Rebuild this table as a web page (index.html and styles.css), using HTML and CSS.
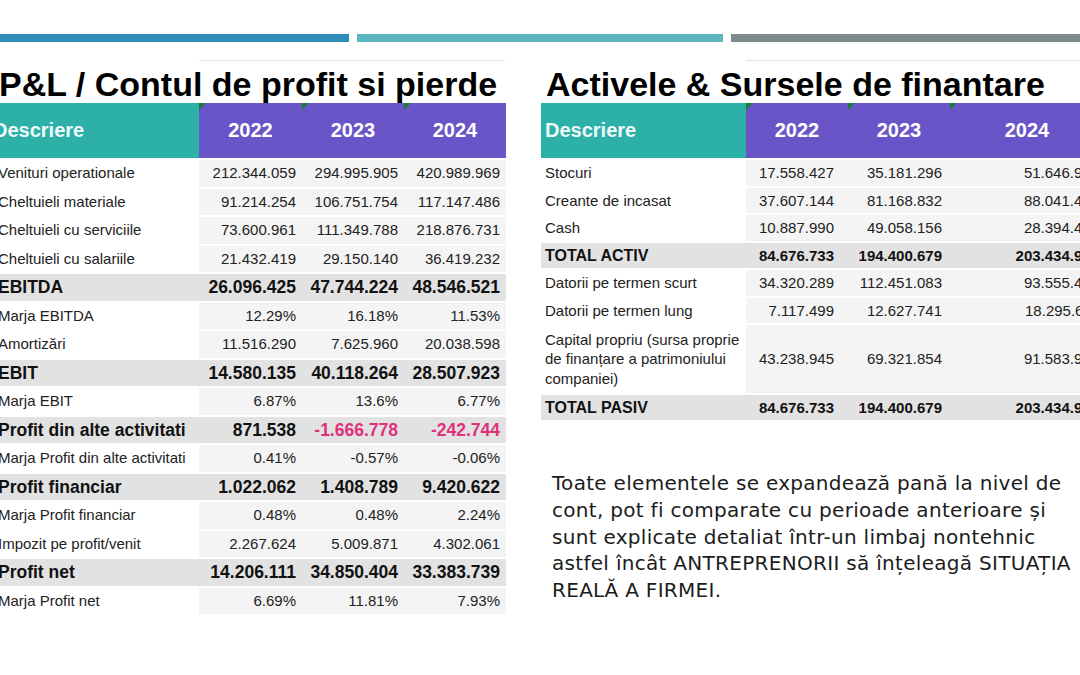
FILE: index.html
```html
<!DOCTYPE html>
<html lang="ro">
<head>
  <meta charset="UTF-8" />
  <meta name="viewport" content="width=device-width, initial-scale=1.0" />
  <title>P&amp;L si bilant</title>
  <link rel="stylesheet" href="styles.css">
</head>
<body>
<div class="bars">
  <div class="bar bar-blue"></div>
  <div class="bar bar-teal"></div>
  <div class="bar bar-gray"></div>
</div>

<div class="panels">
  <div class="panel panel-left">
    <h1 class="title">P&amp;L / Contul de profit si pierde</h1>
    <table class="fin pl">
      <colgroup>
        <col class="c-desc"><col class="c-yr"><col class="c-yr"><col class="c-yr">
      </colgroup>
      <thead>
        <tr>
          <th class="desc">Descriere</th>
          <th class="yr">2022</th>
          <th class="yr">2023</th>
          <th class="yr">2024</th>
        </tr>
      </thead>
      <tbody>
        <tr><td>Venituri operationale</td><td class="num">212.344.059</td><td class="num">294.995.905</td><td class="num">420.989.969</td></tr>
        <tr><td>Cheltuieli materiale</td><td class="num">91.214.254</td><td class="num">106.751.754</td><td class="num">117.147.486</td></tr>
        <tr><td>Cheltuieli cu serviciile</td><td class="num">73.600.961</td><td class="num">111.349.788</td><td class="num">218.876.731</td></tr>
        <tr><td>Cheltuieli cu salariile</td><td class="num">21.432.419</td><td class="num">29.150.140</td><td class="num">36.419.232</td></tr>
        <tr class="total"><td>EBITDA</td><td class="num">26.096.425</td><td class="num">47.744.224</td><td class="num">48.546.521</td></tr>
        <tr><td>Marja EBITDA</td><td class="num">12.29%</td><td class="num">16.18%</td><td class="num">11.53%</td></tr>
        <tr><td>Amortizări</td><td class="num">11.516.290</td><td class="num">7.625.960</td><td class="num">20.038.598</td></tr>
        <tr class="total"><td>EBIT</td><td class="num">14.580.135</td><td class="num">40.118.264</td><td class="num">28.507.923</td></tr>
        <tr><td>Marja EBIT</td><td class="num">6.87%</td><td class="num">13.6%</td><td class="num">6.77%</td></tr>
        <tr class="total"><td>Profit din alte activitati</td><td class="num">871.538</td><td class="num neg">-1.666.778</td><td class="num neg">-242.744</td></tr>
        <tr><td>Marja Profit din alte activitati</td><td class="num">0.41%</td><td class="num">-0.57%</td><td class="num">-0.06%</td></tr>
        <tr class="total"><td>Profit financiar</td><td class="num">1.022.062</td><td class="num">1.408.789</td><td class="num">9.420.622</td></tr>
        <tr><td>Marja Profit financiar</td><td class="num">0.48%</td><td class="num">0.48%</td><td class="num">2.24%</td></tr>
        <tr><td>Impozit pe profit/venit</td><td class="num">2.267.624</td><td class="num">5.009.871</td><td class="num">4.302.061</td></tr>
        <tr class="total"><td>Profit net</td><td class="num">14.206.111</td><td class="num">34.850.404</td><td class="num">33.383.739</td></tr>
        <tr><td>Marja Profit net</td><td class="num">6.69%</td><td class="num">11.81%</td><td class="num">7.93%</td></tr>
      </tbody>
    </table>
  </div>

  <div class="panel panel-right">
    <h1 class="title">Activele &amp; Sursele de finantare</h1>
    <table class="fin bs">
      <colgroup>
        <col class="c-desc"><col class="c-yr"><col class="c-yr"><col class="c-last">
      </colgroup>
      <thead>
        <tr>
          <th class="desc">Descriere</th>
          <th class="yr">2022</th>
          <th class="yr">2023</th>
          <th class="yr">2024</th>
        </tr>
      </thead>
      <tbody>
        <tr><td>Stocuri</td><td class="num">17.558.427</td><td class="num">35.181.296</td><td class="num">51.646.937</td></tr>
        <tr><td>Creante de incasat</td><td class="num">37.607.144</td><td class="num">81.168.832</td><td class="num">88.041.463</td></tr>
        <tr><td>Cash</td><td class="num">10.887.990</td><td class="num">49.058.156</td><td class="num">28.394.418</td></tr>
        <tr class="total"><td>TOTAL ACTIV</td><td class="num">84.676.733</td><td class="num">194.400.679</td><td class="num">203.434.925</td></tr>
        <tr><td>Datorii pe termen scurt</td><td class="num">34.320.289</td><td class="num">112.451.083</td><td class="num">93.555.402</td></tr>
        <tr><td>Datorii pe termen lung</td><td class="num">7.117.499</td><td class="num">12.627.741</td><td class="num">18.295.611</td></tr>
        <tr class="tall"><td>Capital propriu (sursa proprie de finanțare a patrimoniului companiei)</td><td class="num">43.238.945</td><td class="num">69.321.854</td><td class="num">91.583.912</td></tr>
        <tr class="total"><td>TOTAL PASIV</td><td class="num">84.676.733</td><td class="num">194.400.679</td><td class="num">203.434.925</td></tr>
      </tbody>
    </table>

    <p class="note">
      Toate elementele se expandează pană la nivel de<br>
      cont, pot fi comparate cu perioade anterioare și<br>
      sunt explicate detaliat într-un limbaj nontehnic<br>
      astfel încât ANTREPRENORII să înțeleagă SITUAȚIA<br>
      REALĂ A FIRMEI.
    </p>
  </div>
</div>
</body>
</html>
```

FILE: styles.css
```css
* { box-sizing: border-box; margin: 0; padding: 0; }

body {
  width: 1080px;
  height: 675px;
  overflow: hidden;
  background: #ffffff;
  font-family: "Liberation Sans", Arial, sans-serif;
  color: #222222;
}

/* top colour strips */
.bars {
  display: flex;
  gap: 8px;
  margin-top: 34px;
  height: 8px;
}
.bar { height: 100%; }
.bar-blue { width: 349px; background: #2f8db7; }
.bar-teal { width: 366px; background: #5bb6c1; }
.bar-gray { flex: 1; background: #7e8b8c; }

.panels {
  display: flex;
  align-items: flex-start;
  margin-top: 18px;
}
.panel { flex: none; }
.panel-left {
  width: 514px;
  margin-left: -8px;
  margin-right: 35px;
}
.panel-right { width: 563px; }

.title {
  height: 43px;
  padding-top: 5px;
  line-height: 38px;
  font-size: 34px;
  font-weight: bold;
  color: #000000;
  white-space: nowrap;
  background: linear-gradient(#e3e3e3, #e3e3e3) no-repeat;
  background-size: 306px 1px;
}
.panel-left .title {
  padding-left: 7px;
  background-position: 207px 0;
}
.panel-right .title {
  padding-left: 5px;
  background-size: 360px 1px;
  background-position: 205px 0;
}

/* tables */
.fin {
  border-collapse: collapse;
  table-layout: fixed;
  width: 100%;
}
.fin th,
.fin td {
  border-bottom: 2px solid #ffffff;
}
.fin th {
  height: 56px;
  font-size: 20px;
  font-weight: bold;
  color: #ffffff;
}
.fin th.desc {
  background: #2cb0a8;
  text-align: left;
  color: #eef8f7;
}
.fin th.yr {
  position: relative;
  background: #6a55c8;
  text-align: center;
}
.fin th.yr::before {
  content: "";
  position: absolute;
  left: 0;
  top: 0;
  border-top: 7px solid #1f7a35;
  border-right: 7px solid transparent;
}

.fin td {
  font-size: 15px;
  white-space: nowrap;
  background: #ffffff;
}
.fin td.num {
  text-align: right;
  background: #f4f4f4;
}
.fin tr.total td {
  background: #e2e2e2;
  font-weight: bold;
  color: #111111;
}
.fin tr td.neg,
.fin tr.total td.neg { color: #e0317c; }

.pl .c-desc { width: 207px; }
.pl .c-yr { width: 102px; }
.pl col.c-yr:nth-child(2) { width: 103px; }
.pl th.desc { padding-left: 1px; }
.pl td {
  height: 28.5px;
  padding: 0 6px;
  line-height: 18px;
}
.pl tr.total td { font-size: 17.5px; }

.bs .c-desc { width: 205px; }
.bs .c-yr { width: 102px; }
.bs .c-last { width: 154px; }
.bs th.desc { padding-left: 4px; }
.bs td {
  height: 27.5px;
  padding: 3px 4px;
  line-height: 19.5px;
}
.bs td.num { padding-right: 14px; }
.bs td.num:nth-child(3) { padding-right: 8px; }
.bs td.num:nth-child(4) { padding-right: 5px; }
.bs tr.tall td {
  height: 69px;
  white-space: normal;
  padding-top: 4.5px;
  padding-bottom: 4.5px;
}
.bs tr.total td:first-child { font-size: 16px; }

/* explanatory note */
.note {
  margin-top: 48px;
  padding-left: 11px;
  font-family: "DejaVu Sans", sans-serif;
  font-size: 20px;
  line-height: 26.8px;
  letter-spacing: 0.3px;
  white-space: nowrap;
  color: #1c1c1c;
}
```
